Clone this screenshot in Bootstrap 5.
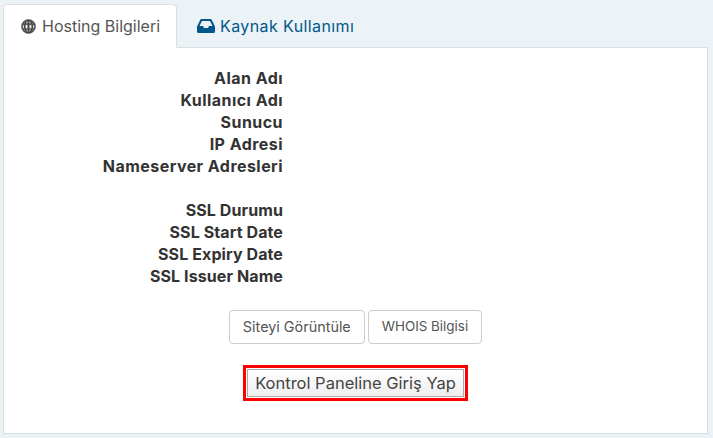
<!DOCTYPE html>
<html lang="tr">
<head>
<meta charset="utf-8">
<title>Hosting Bilgileri</title>
<link href="https://cdn.jsdelivr.net/npm/bootstrap@5.3.0/dist/css/bootstrap.min.css" rel="stylesheet">
<style>
html,body{height:100%}
body{background:#ecf3f7;font-family:Inter,"Noto Sans",sans-serif;color:#333;overflow:hidden}
.shell{padding:4px 5px 0 3px}
.tabs-x{border-bottom:1px solid #dcdfe2;height:44px;flex-wrap:nowrap}
.tabs-x .nav-link{height:44px;margin-bottom:-1px;padding:0 16px 0 17px;display:flex;align-items:center;gap:6px;font-size:16px;border:1px solid transparent;border-radius:4px 4px 0 0;color:#00578a;background:transparent}
.tabs-x .nav-link.active{color:#555;background:#fff;border-color:#dcdfe2 #dcdfe2 #fff}
.tabs-x .tab-two{letter-spacing:.4px;padding-left:19px;gap:5px}
.tabs-x .ti{width:15px;height:15px;flex:none;stroke:#444;stroke-width:.5}
.tabs-x .ti-box{width:18px;height:14px;flex:none}
.pane-x{background:#fff;border:1px solid #dcdfe2;border-top:0;height:386px;padding-top:19px}
.info-lines{width:279px;text-align:right;font-weight:700;font-size:16px;line-height:22px;color:#333;letter-spacing:.45px}
.ssl-line{letter-spacing:.1px}
.info-gap{height:22px}
.acts{margin-top:23px;gap:3px}
.act-btn{height:34px;line-height:1;padding:0 13px;background:#fff;border:1px solid #ccc;border-radius:4px;color:#555;display:flex;align-items:center}
.act-one{font-size:14.4px}
.act-two{font-size:13.4px}
.panel-wrap{margin-top:21px}
.red-frame{border:3px solid #f00;padding:1px;display:inline-flex}
.login-btn{height:28px;width:217px;padding:0;font-size:16.5px;color:#444;border:1px solid #aaa;border-radius:0;background:linear-gradient(#fff,#eee);display:flex;align-items:center;justify-content:center}
</style>
</head>
<body>
<div class="shell">
<ul class="nav nav-tabs tabs-x">
<li class="nav-item"><a class="nav-link active" href="#"><svg class="ti" viewBox="0 0 16 16" fill="#444"><path d="M8 .5a7.5 7.5 0 1 0 0 15 7.500 7.500 0 0 0 0-15Zm-.8 1.400v2.800H5.200c.4-1.300 1.100-2.300 2-2.800Zm1.600 0c.9.500 1.600 1.500 2 2.800h-2V1.900ZM3.700 4.700H2.600a6.300 6.300 0 0 1 2.200-2.200c-.5.600-.8 1.400-1.100 2.200Zm8.600 0c-.3-.8-.6-1.600-1.100-2.200a6.300 6.300 0 0 1 2.200 2.200h-1.100ZM2 6h1.400a11 11 0 0 0 0 4H2a6.300 6.300 0 0 1 0-4Zm2.800 0h2.400v4H4.800a10 10 0 0 1 0-4Zm4 0h2.400a10 10 0 0 1 0 4H8.800V6Zm3.800 0H14a6.300 6.300 0 0 1 0 4h-1.400a11 11 0 0 0 0-4ZM2.600 11.300h1.100c.3.800.6 1.600 1.100 2.200a6.300 6.300 0 0 1-2.200-2.200Zm2.600 0h2v2.800c-.9-.5-1.600-1.500-2-2.800Zm3.600 0h2c-.4 1.300-1.100 2.300-2 2.800v-2.800Zm3.500 0h1.100a6.300 6.300 0 0 1-2.200 2.200c.5-.6.800-1.400 1.100-2.200Z"/></svg>Hosting Bilgileri</a></li>
<li class="nav-item"><a class="nav-link tab-two" href="#"><svg class="ti-box" viewBox="0 0 18 14" fill="#00578a"><path d="M4.500 0h9c.5 0 1 .3 1.200.8L18 7.500V12.500c0 .8-.7 1.500-1.500 1.500h-15C.7 14 0 13.300 0 12.500V7.500L3.300.8C3.500.3 4 0 4.500 0Zm.5 2L2.500 7H6l1 2h4l1-2h3.500L13 2H5Z"/></svg>Kaynak Kullanımı</a></li>
</ul>
<div class="pane-x">
<div class="info-lines">
<div>Alan Adı</div><div>Kullanıcı Adı</div><div>Sunucu</div><div>IP Adresi</div><div>Nameserver Adresleri</div>
<div class="info-gap"></div>
<div class="ssl-line">SSL Durumu</div><div class="ssl-line">SSL Start Date</div><div class="ssl-line">SSL Expiry Date</div><div class="ssl-line">SSL Issuer Name</div>
</div>
<div class="d-flex justify-content-center acts">
<a class="btn act-btn act-one" href="#">Siteyi Görüntüle</a>
<a class="btn act-btn act-two" href="#">WHOIS Bilgisi</a>
</div>
<div class="d-flex justify-content-center panel-wrap">
<div class="red-frame"><button class="btn login-btn" type="button">Kontrol Paneline Giriş Yap</button></div>
</div>
</div>
</div>
<script src="https://cdn.jsdelivr.net/npm/bootstrap@5.3.0/dist/js/bootstrap.bundle.min.js"></script>
</body>
</html>
